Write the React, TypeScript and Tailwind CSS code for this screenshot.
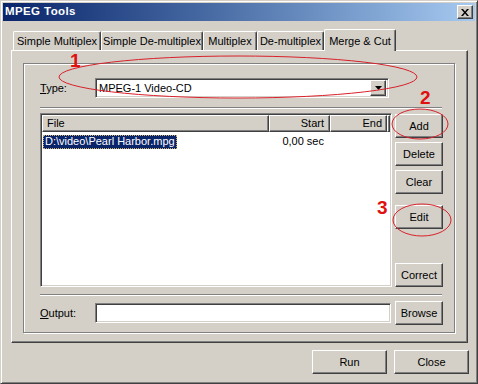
import React from 'react';

// classic 3D bevels
const raised =
  'bg-[#d4d0c8] border border-t-white border-l-white border-r-[#404040] border-b-[#404040] shadow-[inset_-1px_-1px_0_#808080]';
const sunken =
  'bg-white border border-t-[#808080] border-l-[#808080] border-r-white border-b-white shadow-[inset_1px_1px_0_#404040,inset_-1px_-1px_0_#d4d0c8]';
const etched = 'border-t border-t-[#808080] border-b border-b-white';

function Button({ label, className = '' }: { label: string; className?: string }) {
  return (
    <div className={`${raised} flex items-center justify-center text-black ${className}`}>
      {label}
    </div>
  );
}

function Tab({ label, width, active }: { label: string; width: number; active?: boolean }) {
  if (active) {
    return (
      <div
        className="relative z-10 -mb-px h-[22px] flex items-start justify-center pt-[3px] bg-[#d4d0c8] border-l border-t border-l-white border-t-white border-r border-r-[#404040] shadow-[inset_-1px_0_0_#808080] rounded-tl-[2px] rounded-tr-[2px]"
        style={{ width }}
      >
        {label}
      </div>
    );
  }
  return (
    <div
      className="h-[19px] flex items-center justify-center pt-px bg-[#d4d0c8] border-l border-t border-l-white border-t-white border-r border-r-[#404040] shadow-[inset_-1px_0_0_#808080] rounded-tl-[2px] rounded-tr-[2px]"
      style={{ width }}
    >
      {label}
    </div>
  );
}

function Annotations() {
  return (
    <div className="absolute inset-0 pointer-events-none">
      <svg width="478" height="384" className="absolute left-0 top-0">
        <ellipse cx="237" cy="76" rx="179" ry="21" fill="none" stroke="#d9202a" strokeWidth="1" />
        <ellipse cx="419" cy="123" rx="28" ry="15" fill="none" stroke="#d9202a" strokeWidth="1" />
        <ellipse cx="421" cy="219" rx="29" ry="16" fill="none" stroke="#d9202a" strokeWidth="1" />
      </svg>
      <span className="absolute left-[69px] top-[50px] text-[19px] leading-none font-bold text-[#e01010]">1</span>
      <span className="absolute left-[419px] top-[87px] text-[19px] leading-none font-bold text-[#e01010]">2</span>
      <span className="absolute left-[376px] top-[197px] text-[19px] leading-none font-bold text-[#e01010]">3</span>
    </div>
  );
}

export default function App() {
  return (
    <div className="relative w-[478px] h-[384px] overflow-hidden bg-[#d4d0c8] p-[2px] border border-t-[#d4d0c8] border-l-[#d4d0c8] border-r-[#404040] border-b-[#404040] shadow-[inset_1px_1px_0_#fff,inset_-1px_-1px_0_#808080] font-['Liberation_Sans',Arial,sans-serif] text-[11px] text-black">
      {/* title bar */}
      <div className="h-[18px] flex items-center justify-between bg-gradient-to-r from-[#0a246a] to-[#a6caf0] pl-[2px] pr-[2px]">
        <span className="text-white font-bold text-[11.5px] tracking-[0.4px]">MPEG Tools</span>
        <div className={`${raised} w-[16px] h-[14px] flex items-center justify-center`}>
          <svg width="8" height="7" viewBox="0 0 8 7">
            <path d="M0 0h2l2 2.5L6 0h2L5 3.5 8 7H6L4 4.5 2 7H0l3-3.5z" fill="#000" />
          </svg>
        </div>
      </div>

      {/* tabs + panel */}
      <div className="mt-[8px] ml-[8px]">
        <div className="flex items-end h-[21px] pl-[2px]">
          <Tab label="Simple Multiplex" width={88} />
          <Tab label="Simple De-multiplex" width={102} />
          <Tab label="Multiplex" width={54} />
          <Tab label="De-multiplex" width={67} />
          <Tab label="Merge & Cut" width={72} active />
        </div>
        <div className={`${raised} w-[457px] h-[293px] pt-[12px] pl-[11px]`}>
          {/* group box */}
          <div className="w-[432px] h-[270px] border border-[#808080] shadow-[inset_1px_1px_0_#fff,1px_1px_0_#fff] pt-[14px] pl-[16px]">
            <div className="flex items-center h-[20px]">
              <span className="w-[55px]">
                <span className="underline">T</span>ype:
              </span>
              <div className={`${sunken} w-[294px] h-[20px] flex items-center justify-between pl-[3px] pr-[2px]`}>
                <span>MPEG-1 Video-CD</span>
                <div className={`${raised} w-[16px] h-[16px] flex items-center justify-center`}>
                  <svg width="7" height="4" viewBox="0 0 7 4">
                    <path d="M0 0h7L3.5 4z" fill="#000" />
                  </svg>
                </div>
              </div>
            </div>

            <div className={`${etched} mt-[9px] w-[402px] h-[2px]`} />

            <div className="mt-[4px] flex h-[174px]">
              {/* list view */}
              <div className={`${sunken} w-[352px] h-full flex flex-col p-[1px]`}>
                <div className="flex h-[17px]">
                  <div className={`${raised} w-[227px] h-full flex items-center pl-[4px]`}>File</div>
                  <div className={`${raised} w-[61px] h-full flex items-center justify-end pr-[5px]`}>Start</div>
                  <div className={`${raised} w-[57px] h-full flex items-center justify-end pr-[4px]`}>End</div>
                  <div className={`${raised} flex-1 h-full`} />
                </div>
                <div className="mt-[2px] flex h-[14px] items-center">
                  <div className="w-[227px] pl-px">
                    <span className="inline-block h-[14px] leading-[13px] px-[2px] bg-[#0a246a] text-white outline-1 outline-dotted outline-[#c9b16b] -outline-offset-1">
                      D:\video\Pearl Harbor.mpg
                    </span>
                  </div>
                  <div className="w-[61px] text-right pr-[6px]">0,00 sec</div>
                </div>
              </div>

              {/* side buttons */}
              <div className="ml-[3px] w-[48px] flex flex-col">
                <Button label="Add" className="h-[24px] mt-px" />
                <Button label="Delete" className="h-[24px] mt-[4px]" />
                <Button label="Clear" className="h-[24px] mt-[4px]" />
                <Button label="Edit" className="h-[24px] mt-[11px]" />
                <Button label="Correct" className="h-[24px] mt-auto" />
              </div>
            </div>

            <div className={`${etched} mt-[7px] w-[402px] h-[2px]`} />

            <div className="mt-[5px] flex items-center h-[24px]">
              <span className="w-[55px]">
                <span className="underline">O</span>utput:
              </span>
              <div className={`${sunken} w-[296px] h-[20px]`} />
              <Button label="Browse" className="ml-[4px] w-[48px] h-[24px]" />
            </div>
          </div>
        </div>
      </div>

      {/* dialog buttons */}
      <div className="mt-[7px] flex justify-end gap-[7px] pr-[6px]">
        <Button label="Run" className="w-[75px] h-[24px]" />
        <Button label="Close" className="w-[75px] h-[24px]" />
      </div>

      <Annotations />
    </div>
  );
}
